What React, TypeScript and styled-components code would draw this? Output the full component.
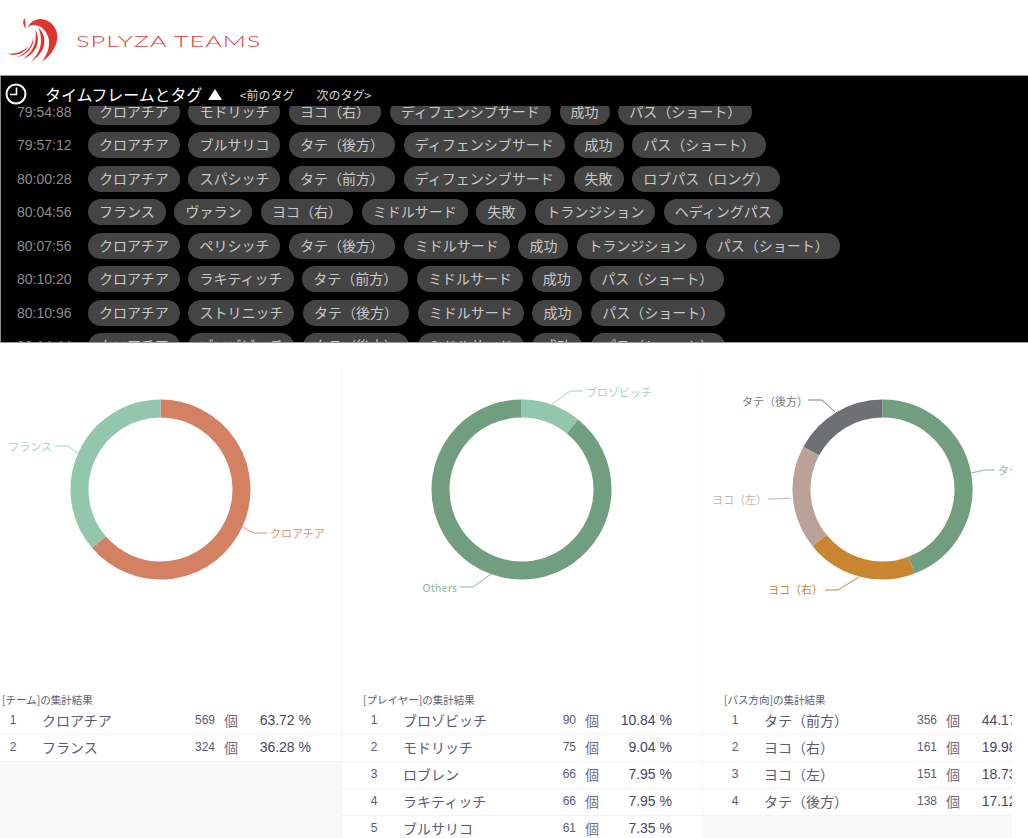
import React from "react";
import styled, { createGlobalStyle } from "styled-components";

const Global = createGlobalStyle`
  html, body { margin: 0; padding: 0; background: #fff; }
  body { font-family: "Liberation Sans", "Noto Sans CJK JP", sans-serif; }
  * { box-sizing: border-box; }
`;

const Page = styled.div`
  width: 1028px;
  height: 838px;
  overflow: hidden;
  background: #fff;
`;

const Brand = styled.header`
  height: 75px;
  display: flex;
  align-items: center;
  background: #fff;
`;

const LogoMark = styled.svg`
  width: 70px;
  height: 75px;
  flex: none;
`;

const Wordmark = styled.span`
  margin: 6px 0 0 6px;
  font-family: "Lato", "Liberation Sans", sans-serif;
  font-weight: 300;
  font-size: 16px;
  line-height: 16px;
  letter-spacing: 0.6px;
  color: #dc3f3f;
  transform: scaleX(1.59);
  transform-origin: left center;
  white-space: nowrap;
`;

const Panel = styled.section`
  height: 268px;
  background: #000;
  border-top: 1px solid #9a9a9a;
  border-left: 1px solid #8a8a8a;
  border-bottom: 1px solid #9a9a9a;
  display: flex;
  flex-direction: column;
`;

const PanelHead = styled.div`
  height: 30px;
  flex: none;
  display: flex;
  align-items: center;
  padding: 6px 0 0 4px;
  color: #fff;
  font-family: "Noto Sans CJK JP", sans-serif;
`;

const ClockIcon = styled.svg`
  width: 22px;
  height: 22px;
  flex: none;
`;

const PanelTitle = styled.span`
  margin-left: 18px;
  font-size: 16px;
  letter-spacing: -0.1px;
  white-space: nowrap;
`;

const Triangle = styled.span`
  margin-left: 5.5px;
  width: 0;
  height: 0;
  border-left: 7.5px solid transparent;
  border-right: 7.5px solid transparent;
  border-bottom: 11px solid #fff;
`;

const NavLink = styled.span<{ $gap: number }>`
  margin-left: ${(p) => p.$gap}px;
  font-size: 12px;
  color: #d4d4d4;
  white-space: nowrap;
`;

const ListClip = styled.div`
  flex: 1;
  min-height: 0;
  overflow: hidden;
`;

const List = styled.div`
  margin-top: -7.2px;
`;

const TagRow = styled.div`
  height: 33.5px;
  display: flex;
  align-items: flex-start;
  gap: 8.7px;
`;

const Time = styled.span`
  width: 78.3px;
  padding-left: 16px;
  line-height: 26px;
  font-size: 14px;
  color: #8c8c8c;
  flex: none;
`;

const Pill = styled.span`
  height: 26px;
  line-height: 25px;
  padding: 0 11px;
  border-radius: 13px;
  background: #444;
  color: #c9c9c9;
  font-family: "Noto Sans CJK JP", sans-serif;
  font-size: 14px;
  white-space: nowrap;
  flex: none;
`;

const Clip = styled.div`
  width: 1012px;
  height: 471px;
  margin-top: 24px;
  overflow: hidden;
`;

const Columns = styled.div`
  margin-left: -20px;
  width: 1083px;
  height: 100%;
  display: grid;
  grid-template-columns: repeat(3, 361px);
`;

const Column = styled.div`
  display: flex;
  flex-direction: column;
  border-left: 1px solid #f6f6f6;
`;

const Chart = styled.svg`
  display: block;
  margin-left: -1px;
  width: 361px;
  height: 325px;
  flex: none;
  overflow: visible;
`;

const ChartLabel = styled.text`
  font-family: "Noto Sans CJK JP", sans-serif;
  font-size: 11px;
  dominant-baseline: central;
`;

const TableBlock = styled.div`
  flex: 1;
  background: #f9f9f9;
`;

const TableTitle = styled.div`
  height: 16px;
  background: #fff;
  padding-left: 21px;
  font-family: "Noto Sans CJK JP", sans-serif;
  font-size: 10.5px;
  line-height: 16px;
  color: #5c5c70;
  white-space: nowrap;
`;

const Row = styled.div`
  height: 27px;
  padding-bottom: 3px;
  display: grid;
  grid-template-columns: 61px 143px 30px 23px 73px;
  align-items: center;
  background: #fff;
  border-bottom: 1px solid #f3f3f3;
  color: #5a5a74;
  font-size: 14px;
`;

const Rank = styled.span`
  padding-left: 3px;
  text-align: center;
  font-size: 12px;
`;

const Name = styled.span`
  font-family: "Noto Sans CJK JP", sans-serif;
  white-space: nowrap;
`;

const Count = styled.span`
  text-align: right;
  font-size: 12px;
`;

const Unit = styled.span`
  padding-left: 9px;
  font-family: "Noto Sans CJK JP", sans-serif;
  color: #70707f;
`;

const Percent = styled.span`
  text-align: right;
  color: #46465f;
  white-space: nowrap;
`;

const rows: [string, string[]][] = [
  ["79:54:88", ["クロアチア", "モドリッチ", "ヨコ（右）", "ディフェンシブサード", "成功", "パス（ショート）"]],
  ["79:57:12", ["クロアチア", "ブルサリコ", "タテ（後方）", "ディフェンシブサード", "成功", "パス（ショート）"]],
  ["80:00:28", ["クロアチア", "スパシッチ", "タテ（前方）", "ディフェンシブサード", "失敗", "ロブパス（ロング）"]],
  ["80:04:56", ["フランス", "ヴァラン", "ヨコ（右）", "ミドルサード", "失敗", "トランジション", "ヘディングパス"]],
  ["80:07:56", ["クロアチア", "ペリシッチ", "タテ（後方）", "ミドルサード", "成功", "トランジション", "パス（ショート）"]],
  ["80:10:20", ["クロアチア", "ラキティッチ", "タテ（前方）", "ミドルサード", "成功", "パス（ショート）"]],
  ["80:10:96", ["クロアチア", "ストリニッチ", "タテ（後方）", "ミドルサード", "成功", "パス（ショート）"]],
  ["80:14:44", ["クロアチア", "ブロゾビッチ", "タテ（後方）", "ミドルサード", "成功", "パス（ショート）"]],
];

const GREEN = "#729e80";
const MINT = "#92c7ae";
const CORAL = "#d38063";
const AMBER = "#c9852f";
const TAUPE = "#bba198";
const SLATE = "#6e7074";

type Label = { text: string; x: number; y: number; anchor: "start" | "end"; line: string; color: string };
type ChartData = {
  title: string;
  slices: [number, string][];
  labels: Label[];
  rows: [string, string, string][];
};

// Label coordinates are relative to the column: page x + 20 - column index * 361, page y - 367.
const charts: ChartData[] = [
  {
    title: "[チーム]の集計結果",
    slices: [[63.72, CORAL], [36.28, MINT]],
    labels: [
      { text: "フランス", x: 72, y: 79, anchor: "end", line: "100,88 88,79 75,79", color: "#a6d2bd" },
      { text: "クロアチア", x: 290, y: 166, anchor: "start", line: "263,160 273,166 287,166", color: "#dc9379" },
    ],
    rows: [
      ["クロアチア", "569", "63.72 %"],
      ["フランス", "324", "36.28 %"],
    ],
  },
  {
    title: "[プレイヤー]の集計結果",
    slices: [[10.84, MINT], [89.16, GREEN]],
    labels: [
      { text: "ブロゾビッチ", x: 245, y: 25, anchor: "start", line: "211,37 229,24 242,24", color: "#a6d2bd" },
      { text: "Others", x: 116, y: 220, anchor: "end", line: "150,207 132,220 119,220", color: "#8fb8a0" },
    ],
    rows: [
      ["ブロゾビッチ", "90", "10.84 %"],
      ["モドリッチ", "75", "9.04 %"],
      ["ロブレン", "66", "7.95 %"],
      ["ラキティッチ", "66", "7.95 %"],
      ["ブルサリコ", "61", "7.35 %"],
    ],
  },
  {
    title: "[パス方向]の集計結果",
    slices: [[44.17, GREEN], [19.98, AMBER], [18.73, TAUPE], [17.12, SLATE]],
    labels: [
      { text: "タテ（前方）", x: 296, y: 103, anchor: "start", line: "269,106 283,103 293,103", color: "#8fb8a0" },
      { text: "ヨコ（右）", x: 66, y: 222, anchor: "start", line: "157,210 136,223 123,223", color: AMBER },
      { text: "ヨコ（左）", x: 10, y: 132, anchor: "start", line: "89,131 73,132 66,132", color: "#c9b3ab" },
      { text: "タテ（後方）", x: 40, y: 34, anchor: "start", line: "133,45 120,33 106,33", color: "#77797e" },
    ],
    rows: [
      ["タテ（前方）", "356", "44.17 %"],
      ["ヨコ（右）", "161", "19.98 %"],
      ["ヨコ（左）", "151", "18.73 %"],
      ["タテ（後方）", "138", "17.12 %"],
    ],
  },
];

const CX = 180.5;
const CY = 122.5;
const R = 81;

function arc(from: number, to: number) {
  const point = (pct: number) => {
    const a = (pct / 100) * Math.PI * 2;
    return `${(CX + R * Math.sin(a)).toFixed(2)} ${(CY - R * Math.cos(a)).toFixed(2)}`;
  };
  return `M${point(from)} A${R} ${R} 0 ${to - from > 50 ? 1 : 0} 1 ${point(to)}`;
}

function Donut({ data }: { data: ChartData }) {
  let offset = 0;
  return (
    <Chart viewBox="0 0 361 325">
      {data.slices.map(([value, color]) => {
        const d = arc(offset, offset + value);
        offset += value;
        return <path key={color} d={d} fill="none" stroke={color} strokeWidth="18" />;
      })}
      {data.labels.map((l) => (
        <g key={l.text}>
          <polyline points={l.line} fill="none" stroke={l.color} strokeWidth="1" />
          <ChartLabel x={l.x} y={l.y} textAnchor={l.anchor} fill={l.color}>
            {l.text}
          </ChartLabel>
        </g>
      ))}
    </Chart>
  );
}

export default function App() {
  return (
    <Page>
      <Global />
      <Brand>
        <LogoMark viewBox="0 0 70 75" aria-label="SPLYZA">
          <g fill="#e0352b">
            <path d="M24.5 18 C22.5 21 22.8 25.5 26 28.5 C25 25 25.5 21 24.5 18 Z" />
            <path d="M27.5 28 C30 21.5 37 17.5 44 19.5 C53 22 58 30 57.2 38.5 C56.3 48.5 49 57 42 61.5 C47.5 54 50.5 46 48.5 38 C46.5 30.5 41 25.5 35 25 C31.5 24.8 29 26 27.5 28 Z" />
            <path d="M38 27.5 C44 32 46.5 41.5 42.5 49.5 C39.8 55 35.5 58.5 31 61.5 C37.5 55 41 48.5 41 41 C41 35.5 40 31 38 27.5 Z" />
            <path d="M35.5 30 C38.8 36 38.8 43.5 35 49.5 C32 54 27.5 57.5 23 59 C28.5 55 33 50 34.8 43.5 C35.8 39 36 34.5 35.5 30 Z" />
            <path d="M33 37.5 C34 42.5 32 47.5 28.5 51 C25 54.5 21 56.5 16.5 57.5 C22 55 27 51.5 30 47 C31.8 44 32.8 41 33 37.5 Z" />
            <path d="M28.5 46 C26 50.5 21.5 53.5 17 54.6 C14 55.3 11 55.2 8 53.6 C12 54 16 53.4 19.5 52 C22.8 50.6 26 48.5 28.5 46 Z" />
          </g>
        </LogoMark>
        <Wordmark>SPLYZA TEAMS</Wordmark>
      </Brand>
      <Panel>
        <PanelHead>
          <ClockIcon viewBox="0 0 22 22">
            <circle cx="11" cy="11" r="9.5" fill="none" stroke="#fff" strokeWidth="2" />
            <path d="M11.5 4.5 V11.5 H5" fill="none" stroke="#fff" strokeWidth="1.6" />
          </ClockIcon>
          <PanelTitle>タイムフレームとタグ</PanelTitle>
          <Triangle />
          <NavLink $gap={18}>&lt;前のタグ</NavLink>
          <NavLink $gap={22}>次のタグ&gt;</NavLink>
        </PanelHead>
        <ListClip>
          <List>
            {rows.map(([time, tags]) => (
              <TagRow key={time}>
                <Time>{time}</Time>
                {tags.map((t, i) => (
                  <Pill key={i}>{t}</Pill>
                ))}
              </TagRow>
            ))}
          </List>
        </ListClip>
      </Panel>
      <Clip>
        <Columns>
          {charts.map((c) => (
            <Column key={c.title}>
              <Donut data={c} />
              <TableBlock>
                <TableTitle>{c.title}</TableTitle>
                {c.rows.map(([name, count, pct], i) => (
                  <Row key={name}>
                    <Rank>{i + 1}</Rank>
                    <Name>{name}</Name>
                    <Count>{count}</Count>
                    <Unit>個</Unit>
                    <Percent>{pct}</Percent>
                  </Row>
                ))}
              </TableBlock>
            </Column>
          ))}
        </Columns>
      </Clip>
    </Page>
  );
}
